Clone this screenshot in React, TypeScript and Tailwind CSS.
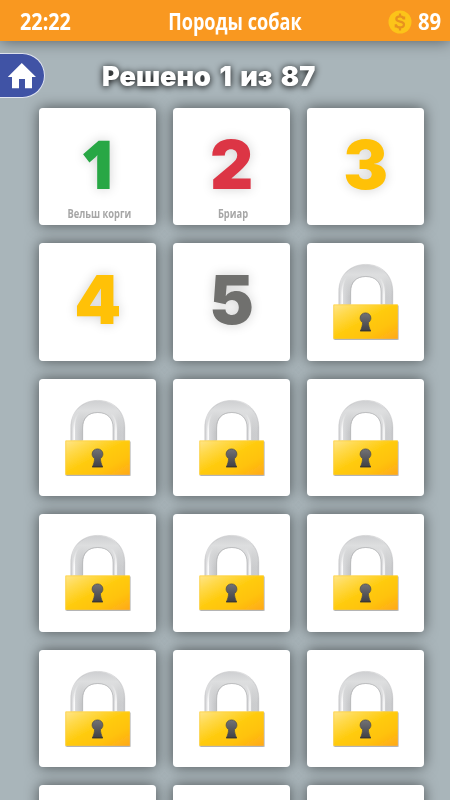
import type { ReactNode } from "react";

type Tile = { number?: number; color?: string; label?: string };

const solved: Tile[] = [
  { number: 1, color: "text-[#28a745]", label: "Вельш корги" },
  { number: 2, color: "text-[#dc3545]", label: "Бриар" },
  { number: 3, color: "text-[#ffc107]" },
  { number: 4, color: "text-[#ffc107]" },
  { number: 5, color: "text-[#70706e]" },
];
const tiles: Tile[] = [...solved, ...Array.from({ length: 13 }, () => ({}))];

function LockDefs() {
  return (
    <svg className="absolute size-0" aria-hidden="true">
      <defs>
        <linearGradient id="lockBody" x1="0" y1="0" x2="1" y2="1">
          <stop offset="0" stopColor="#ffe58a" />
          <stop offset="0.22" stopColor="#ffd94a" />
          <stop offset="0.5" stopColor="#ffca08" />
          <stop offset="0.72" stopColor="#ffc20c" />
          <stop offset="1" stopColor="#ffa919" />
        </linearGradient>
        <linearGradient id="shackle" x1="0" y1="0" x2="1" y2="0">
          <stop offset="0" stopColor="#c6c7c9" />
          <stop offset="0.04" stopColor="#e6e6e8" />
          <stop offset="0.1" stopColor="#d6d7d9" />
          <stop offset="0.21" stopColor="#c3c4c6" />
          <stop offset="0.5" stopColor="#dcddde" />
          <stop offset="0.79" stopColor="#e4e4e6" />
          <stop offset="0.88" stopColor="#cbccce" />
          <stop offset="0.97" stopColor="#cccdcf" />
          <stop offset="1" stopColor="#b4b5b7" />
        </linearGradient>
        <linearGradient id="archShade" x1="0" y1="0" x2="0" y2="1">
          <stop offset="0" stopColor="#cfd0d2" />
          <stop offset="0.3" stopColor="#dddedf" />
          <stop offset="0.65" stopColor="#d6d7d8" stopOpacity="0.6" />
          <stop offset="1" stopColor="#d6d7d8" stopOpacity="0" />
        </linearGradient>
        <linearGradient id="keyhole" x1="0" y1="0" x2="0" y2="1">
          <stop offset="0" stopColor="#727276" />
          <stop offset="1" stopColor="#414146" />
        </linearGradient>
        <linearGradient id="limbShine" gradientUnits="userSpaceOnUse" x1="0" y1="16" x2="0" y2="34">
          <stop offset="0" stopColor="#fff" stopOpacity="0" />
          <stop offset="1" stopColor="#fff" stopOpacity="0.9" />
        </linearGradient>
        <filter id="lockShadow" x="-10%" y="-10%" width="120%" height="125%">
          <feDropShadow dx="0.6" dy="1" stdDeviation="0.7" floodColor="#444" floodOpacity="0.5" />
        </filter>
      </defs>
    </svg>
  );
}

function Lock() {
  return (
    <svg viewBox="0.4 0 70 80" className="mt-[18px] ml-[24px] h-[80px] w-[70px]" aria-label="Закрыто">
      <path
        d="M8.2 45V30.5C8.2 14 19.5 3.4 35.2 3.4S62.2 14 62.2 30.5V45H50.6V31C50.6 21.4 45 15.5 35.2 15.5S20 21.4 20 31V45Z"
        fill="url(#shackle)"
        stroke="#c4c5c7"
        strokeWidth="0.5"
      />
      <path
        d="M8.8 36V30.5C8.8 14.4 20 4 35.2 4S61.6 14.4 61.6 30.5V36H51V31C51 21.1 45 15 35.2 15S19.5 21.1 19.5 31V36Z"
        fill="url(#archShade)"
      />
      <path d="M20 43V31C20 21.4 25.4 15.5 35.2 15.5S50.6 21.4 50.6 31V43" fill="none" stroke="#aaabad" strokeWidth="0.6" />
      <path d="M11.6 43V31C11.6 25 13 20 16 16" fill="none" stroke="url(#limbShine)" strokeWidth="1.5" />
      <path d="M53.4 43V31C53.4 25 52.3 20.5 49 17" fill="none" stroke="url(#limbShine)" strokeWidth="1.6" />
      <rect x="2.8" y="43.5" width="64.4" height="34.3" fill="url(#lockBody)" filter="url(#lockShadow)" />
      <path d="M3.2 77.5V43.9H67" fill="none" stroke="#ffcf35" strokeWidth="0.6" />
      <path
        d="M34.9 51.9C31.8 51.9 29.5 54.1 29.5 57.1C29.5 58.9 30.5 60.6 32 61.7C31.8 64.6 31.1 66.5 29.9 69.8H39.9C38.7 66.5 38 64.6 37.8 61.7C39.3 60.6 40.3 58.9 40.3 57.1C40.3 54.1 38 51.9 34.9 51.9Z"
        fill="url(#keyhole)"
        stroke="#4a4a4e"
        strokeWidth="0.7"
      />
      <path d="M29.5 69.8H40.3" stroke="#27272c" strokeWidth="0.9" />
    </svg>
  );
}

function Card({ children }: { children: ReactNode }) {
  return (
    <div className="h-[117.4px] overflow-hidden rounded-[4px] bg-white">{children}</div>
  );
}

function TileCard({ tile }: { tile: Tile }) {
  const face =
    tile.number === 1
      ? "font-['Open_Sans',sans-serif] text-[68px] font-extrabold -mt-[2px] mb-[2px] ml-[2px] scale-x-[0.93]"
      : "font-['Inter',sans-serif] text-[67px] font-black";
  return (
    <div className="rounded-[4px] shadow-[0_0_14px_rgba(0,0,0,0.55)]">
      <Card>
        {tile.number ? (
          <div className="flex h-full flex-col items-center pt-[32px]">
            <span
              className={`block h-[50px] leading-[50px] [text-shadow:0_0_12px_rgba(0,0,0,0.18)] ${face} ${tile.color}`}
            >
              {tile.number}
            </span>
            {tile.label && (
              <span className="mt-[16px] ml-[3px] block h-[14px] scale-x-[0.72] font-['Open_Sans',sans-serif] text-[13px] leading-[14px] font-bold whitespace-nowrap text-[#a6a6a6]">
                {tile.label}
              </span>
            )}
          </div>
        ) : (
          <Lock />
        )}
      </Card>
    </div>
  );
}

export default function App() {
  return (
    <div className="relative flex h-[800px] w-[450px] flex-col overflow-hidden bg-[#a9b5ba] font-['Open_Sans',sans-serif]">
      <LockDefs />
      <header className="z-10 grid h-[41px] shrink-0 grid-cols-[1fr_auto_1fr] items-center bg-[#f99820] pr-[9px] pl-[20px] text-[22.5px] leading-[41px] font-bold text-white shadow-[0_0_16px_rgba(0,0,0,0.5)]">
        <span className="mt-px origin-left scale-x-[0.88]">22:22</span>
        <h1 className="mt-px ml-[8px] scale-x-[0.805] whitespace-nowrap">Породы собак</h1>
        <div className="mt-px flex items-center justify-end">
          <svg viewBox="0 0 24 24" className="mr-[9px] size-[24px]" aria-hidden="true">
            <circle cx="12" cy="12" r="11.5" fill="#fcc419" />
            <path
              d="M16.1 9.4V6.6M15.9 9C15.2 7.2 13.8 6.4 12 6.4C9.7 6.4 8.3 7.4 8.3 9C8.3 12.8 16 10.4 16 14.5C16 16.3 14.3 17.4 12 17.4C9.9 17.4 8.4 16.5 8 14.9M7.8 14.2V17.4M12 3.6V7M12 17V20.4"
              fill="none"
              stroke="#e8921e"
              strokeWidth="2.2"
            />
          </svg>
          <span className="-ml-[3px] w-[23px] origin-left scale-x-[0.9]">89</span>
        </div>
      </header>

      <div className="flex h-[67px] shrink-0 items-start">
        <button
          aria-label="Домой"
          className="mt-[12px] flex h-[45px] w-[45px] items-center rounded-r-full border border-l-0 border-[#e2e6f2] bg-[#4053a5] pl-[7px]"
        >
          <svg viewBox="0 0 30 26" className="h-[26px] w-[30px]" fill="#fff" aria-hidden="true">
            <path d="M14.8 0L29 14H25V25.3H18V16H12V25.3H5V14H.8Z" />
          </svg>
        </button>
        <h2 className="mt-[18px] ml-[57px] origin-left scale-x-[1.015] font-['Inter',sans-serif] text-[26.7px] leading-[34px] font-black [word-spacing:3px] whitespace-nowrap text-white [text-shadow:0_1px_7px_#000]">
          Решено 1 из 87
        </h2>
      </div>

      <main className="ml-[39px] grid w-[385.3px] shrink-0 grid-cols-3 gap-x-[16.7px] gap-y-[18px]">
        {tiles.map((tile, index) => (
          <TileCard key={index} tile={tile} />
        ))}
      </main>
    </div>
  );
}
